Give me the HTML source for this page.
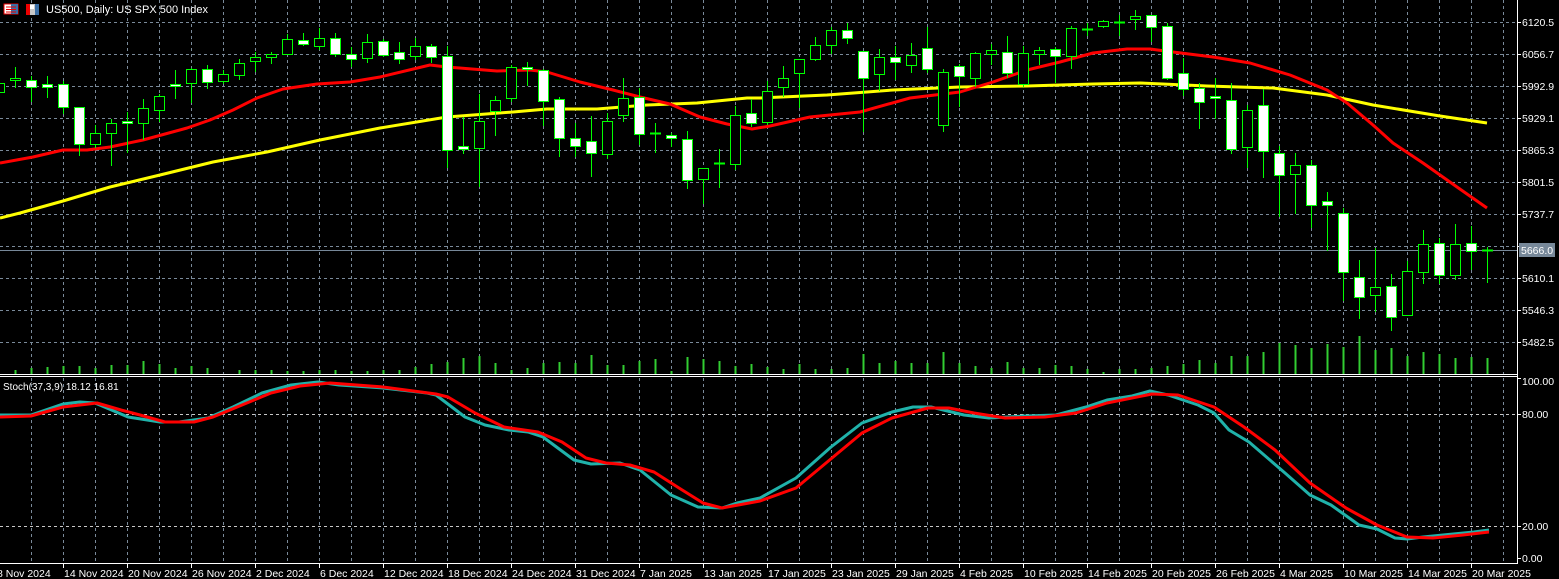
<!DOCTYPE html>
<html><head><meta charset="utf-8">
<style>
html,body{margin:0;padding:0;background:#000;width:1559px;height:579px;overflow:hidden}
svg{display:block}
text{font-family:"Liberation Sans","DejaVu Sans",sans-serif;font-size:10.5px;fill:#fff}
</style></head><body>
<svg id="s" width="1559" height="579" xmlns="http://www.w3.org/2000/svg">
<rect width="1559" height="579" fill="#000"/>
<g id="grid"></g>
<g id="vol"></g>
<line x1="0" y1="250.5" x2="1517" y2="250.5" stroke="#778899" stroke-width="1"/>
<g id="ma"></g>
<g id="candles"></g>
<g id="stoch"></g>
<!-- separators / axes -->
<line x1="0" y1="374.5" x2="1517" y2="374.5" stroke="#fff"/>
<line x1="0" y1="376.5" x2="1517" y2="376.5" stroke="#fff"/>
<line x1="1517.5" y1="0" x2="1517.5" y2="564" stroke="#fff"/>
<line x1="0" y1="563.5" x2="1518" y2="563.5" stroke="#fff"/>
<g id="ticks"></g>
<!-- price labels -->
<text x="1522" y="26">6120.5</text>
<text x="1522" y="58">6056.7</text>
<text x="1522" y="90">5992.9</text>
<text x="1522" y="122">5929.1</text>
<text x="1522" y="154">5865.3</text>
<text x="1522" y="186">5801.5</text>
<text x="1522" y="218">5737.7</text>
<text x="1522" y="250">5673.9</text>
<text x="1522" y="282">5610.1</text>
<text x="1522" y="314">5546.3</text>
<text x="1522" y="346">5482.5</text>
<rect x="1519" y="243" width="36" height="14" fill="#778899"/>
<text x="1521" y="254" style="fill:#fff">5666.0</text>
<text x="1522" y="385">100.00</text>
<text x="1522" y="418">80.00</text>
<text x="1522" y="530">20.00</text>
<text x="1522" y="562">0.00</text>
<!-- date labels -->
<g>
<text x="-3" y="577">8 Nov 2024</text>
<text x="64" y="577">14 Nov 2024</text>
<text x="128" y="577">20 Nov 2024</text>
<text x="192" y="577">26 Nov 2024</text>
<text x="256" y="577">2 Dec 2024</text>
<text x="320" y="577">6 Dec 2024</text>
<text x="384" y="577">12 Dec 2024</text>
<text x="448" y="577">18 Dec 2024</text>
<text x="512" y="577">24 Dec 2024</text>
<text x="576" y="577">31 Dec 2024</text>
<text x="640" y="577">7 Jan 2025</text>
<text x="704" y="577">13 Jan 2025</text>
<text x="768" y="577">17 Jan 2025</text>
<text x="832" y="577">23 Jan 2025</text>
<text x="896" y="577">29 Jan 2025</text>
<text x="960" y="577">4 Feb 2025</text>
<text x="1024" y="577">10 Feb 2025</text>
<text x="1088" y="577">14 Feb 2025</text>
<text x="1152" y="577">20 Feb 2025</text>
<text x="1216" y="577">26 Feb 2025</text>
<text x="1280" y="577">4 Mar 2025</text>
<text x="1344" y="577">10 Mar 2025</text>
<text x="1408" y="577">14 Mar 2025</text>
<text x="1472" y="577">20 Mar 2025</text>
</g>
<!-- header -->
<rect x="4" y="4" width="14" height="10" fill="#fff" stroke="#e00" stroke-width="1"/>
<rect x="11" y="4" width="7" height="10" fill="#3a6ea5"/>
<line x1="6" y1="7" x2="16" y2="7" stroke="#e00"/><line x1="6" y1="9.5" x2="16" y2="9.5" stroke="#e00"/><line x1="6" y1="12" x2="16" y2="12" stroke="#e00"/>
<rect x="26" y="4" width="13" height="11" fill="#c8c8c8"/>
<rect x="26" y="4" width="4" height="11" fill="#e00"/>
<rect x="35" y="4" width="4" height="11" fill="#3a6ea5"/>
<rect x="30" y="5" width="4" height="4" fill="#fff"/>
<text x="46" y="13" style="font-size:11px">US500, Daily:  US SPX 500 Index</text>
<text x="3" y="390" style="font-size:10px">Stoch(37,3,9) 18.12 16.81</text>
</svg>
<script>
var NS="http://www.w3.org/2000/svg";
function el(p,t,a){var e=document.createElementNS(NS,t);for(var k in a)e.setAttribute(k,a[k]);document.getElementById(p).appendChild(e);return e;}
// grid
var gc="#7a8a9a";
for(var x=31.5;x<1517;x+=32){el("grid","line",{x1:x,y1:0,x2:x,y2:563,stroke:gc,"stroke-dasharray":"3,3"});}
[22,54,86,118,150,182,214,246,278,310,342].forEach(function(y){el("grid","line",{x1:0,y1:y+.5,x2:1517,y2:y+.5,stroke:gc,"stroke-dasharray":"3,3"});el("ticks","line",{x1:1517,y1:y+.5,x2:1521,y2:y+.5,stroke:"#fff"});});
[414,526].forEach(function(y){el("grid","line",{x1:0,y1:y+.5,x2:1517,y2:y+.5,stroke:"#c8c8c8","stroke-dasharray":"3,3"});el("ticks","line",{x1:1517,y1:y+.5,x2:1521,y2:y+.5,stroke:"#fff"});});
[378,558].forEach(function(y){el("ticks","line",{x1:1517,y1:y+.5,x2:1521,y2:y+.5,stroke:"#fff"});});
for(var t=-1;t<1517;t+=64){el("ticks","line",{x1:t+.5,y1:563,x2:t+.5,y2:568,stroke:"#fff"});}
// candles [x,bt,bb,wt,wb,white]
var C=[[-1,83,92,80,95,0],[15,78,80,67,88,0],[31,80,87,76,102,1],[47,84,87,76,98,1],[63,84,107,81,114,1],[79,107,144,107,156,1],[95,133,144,125,148,0],[111,123,133,119,166,0],[127,121,123,112,153,1],[143,108,123,99,140,0],[159,96,110,94,122,0],[175,84,86,70,99,1],[191,69,83,68,103,0],[207,69,82,65,89,1],[223,74,81,70,84,0],[239,63,75,59,80,0],[255,57,61,52,72,0],[271,54,57,52,64,0],[287,39,54,34,54,0],[303,40,44,33,46,1],[319,38,46,28,50,0],[335,38,54,33,57,1],[351,54,59,47,67,1],[367,42,58,34,63,0],[383,41,55,39,57,1],
[399,52,59,42,64,1],[415,46,56,38,60,0],[431,46,57,44,63,1],[447,56,150,46,168,1],[463,146,149,117,154,1],[479,121,148,94,187,0],[495,100,111,96,136,0],[511,67,98,65,102,0],[527,67,69,62,86,1],[543,70,101,69,126,1],[559,99,138,97,157,1],[575,138,146,123,157,1],[591,141,153,116,177,1],[607,121,154,113,159,0],[623,98,115,78,122,0],[639,97,134,88,145,1],[655,133,134,123,153,0],[671,135,138,133,147,1],[687,139,180,131,189,1],[703,168,179,168,204,0],[719,163,164,149,188,0],[735,115,164,106,170,0],[751,113,123,99,127,1],
[767,91,122,81,125,0],[783,78,87,66,97,0],[799,59,73,59,108,0],[815,45,59,37,61,0],[831,30,45,27,54,0],[847,30,38,23,44,1],[863,51,78,51,132,1],[879,57,74,49,91,0],[895,57,62,46,80,1],[911,55,65,43,73,0],[927,48,69,27,73,1],[943,72,125,69,132,0],[959,66,76,64,107,1],[975,53,78,52,87,0],[991,50,54,44,65,0],[1007,52,73,36,78,1],[1023,53,84,46,87,0],[1039,50,54,47,65,0],[1055,49,56,47,83,1],[1071,28,56,26,69,0],[1087,29,29,23,36,0],[1103,21,26,20,28,0],[1119,22,22,15,36,0],[1135,16,19,10,30,0],
[1151,15,27,15,42,1],[1167,26,78,23,80,1],[1183,73,89,58,96,1],[1199,88,102,83,129,1],[1215,96,98,78,119,1],[1231,100,149,83,154,1],[1247,110,147,105,168,0],[1263,105,151,89,178,1],[1279,153,175,146,217,1],[1295,165,174,153,214,0],[1311,165,205,160,228,1],[1327,201,205,192,251,1],[1343,213,272,208,301,1],[1359,277,297,260,319,1],[1375,287,295,248,312,0],[1391,286,317,274,331,1],[1407,271,315,261,315,0],[1423,244,272,230,284,0],[1439,243,275,238,284,1],[1455,244,275,224,280,0],[1471,243,251,226,270,1],[1487,250,250,247,283,0]];
var G="#00ff00";
C.forEach(function(c){
 var x=c[0]+.5;
 el("candles","line",{x1:x,y1:c[3],x2:x,y2:c[4],stroke:G});
 if(c[2]-c[1]<=1){el("candles","line",{x1:c[0]-5,y1:c[1]+.5,x2:c[0]+6,y2:c[1]+.5,stroke:G,"stroke-width":2});}
 else el("candles","rect",{x:c[0]-4.5,y:c[1]+.5,width:10,height:c[2]-c[1],fill:c[5]?"#fff":"#000",stroke:G});
});
// volumes
var V={15:370,31:368,47:367,63:366,79:366,95:368,111:365,127:365,143:361,159:364,175:368,191:366,207:368,239:370,255:370,271:370,287:371,303:371,319:370,335:370,351:371,367:371,383:370,399:370,415:367,431:364,447:362,463:358,479:356,495:363,511:370,527:368,543:363,559:362,575:363,591:355,607:365,623:365,639:361,655:359,671:371,687:357,703:359,719:361,735:366,751:364,767:367,783:369,799:364,815:369,831:369,847:368,863:354,879:363,895:361,911:363,927:363,943:352,959:363,975:366,991:368,1007:362,1023:368,1039:368,1055:365,1071:366,1087:369,1103:372,1119:369,1135:369,1151:368,1167:366,1183:364,1199:360,1215:363,1231:356,1247:356,1263:352,1279:343,1295:345,1311:348,1327:344,1343:347,1359:336,1375:350,1391:348,1407:356,1423:352,1439:354,1455:358,1471:357,1487:358};
for(var k in V){el("vol","rect",{x:+k-0.5,y:V[k],width:2,height:374-V[k],fill:"#32cd32"});}
function pl(g,pts,col,w){el(g,"polyline",{points:pts.map(function(p){return p.join(",")}).join(" "),fill:"none",stroke:col,"stroke-width":w,"stroke-linejoin":"round"});}
pl("ma",[[0,218],[20,213],[63,201],[110,187],[160,175],[213,162],[267,152],[320,140],[380,128],[447,117],[513,112],[547,109],[597,109],[647,105],[697,103],[747,98],[760,98],[827,95],[893,90],[960,87],[1027,86],[1093,84],[1140,83],[1207,86],[1273,88],[1327,95],[1373,105],[1440,116],[1487,123]],"#ffff00",3);
pl("ma",[[0,163],[33,157],[63,150],[87,150],[110,147],[143,140],[187,128],[210,120],[233,110],[257,98],[283,89],[317,84],[350,82],[380,77],[430,65],[447,67],[497,71],[530,70],[547,72],[580,82],[613,90],[640,97],[670,104],[700,117],[727,124],[752,129],[770,126],[810,117],[860,112],[910,98],[960,92],[993,82],[1027,70],[1060,62],[1093,53],[1127,49],[1150,49],[1173,52],[1213,57],[1250,63],[1290,75],[1327,90],[1347,103],[1373,125],[1393,143],[1423,163],[1457,187],[1487,208]],"#ff0000",3);
pl("stoch",[[0,415],[31,415],[63,404],[80,402],[95,403],[128,417],[160,422],[179,422],[208,418],[233,407],[262,393],[291,385],[318,382],[339,385],[383,388],[427,393],[436,395],[465,417],[485,425],[509,430],[528,432],[543,437],[574,460],[591,464],[620,463],[640,470],[671,495],[698,507],[722,508],[737,503],[760,498],[796,478],[831,447],[862,423],[892,412],[913,407],[931,407],[964,415],[989,418],[1025,416],[1056,415],[1086,407],[1107,400],[1132,396],[1150,391],[1168,395],[1198,405],[1214,413],[1229,430],[1249,442],[1285,473],[1310,495],[1331,505],[1359,525],[1377,529],[1395,538],[1407,539],[1423,537],[1443,535],[1474,532],[1489,530]],"#20b2aa",3);
pl("stoch",[[0,417],[31,416],[63,407],[97,403],[121,410],[140,415],[165,422],[194,422],[213,417],[242,405],[271,393],[300,386],[330,383],[383,387],[436,394],[448,397],[475,413],[504,427],[538,432],[562,442],[586,458],[606,463],[630,465],[654,472],[679,488],[703,503],[722,508],[760,501],[796,488],[826,463],[862,433],[892,418],[928,408],[949,408],[974,413],[1005,418],[1045,417],[1076,413],[1107,403],[1152,394],[1178,395],[1214,407],[1244,427],[1275,450],[1310,483],[1346,508],[1377,525],[1407,537],[1433,538],[1463,535],[1489,532]],"#ff0000",3);
</script>
</body></html>
